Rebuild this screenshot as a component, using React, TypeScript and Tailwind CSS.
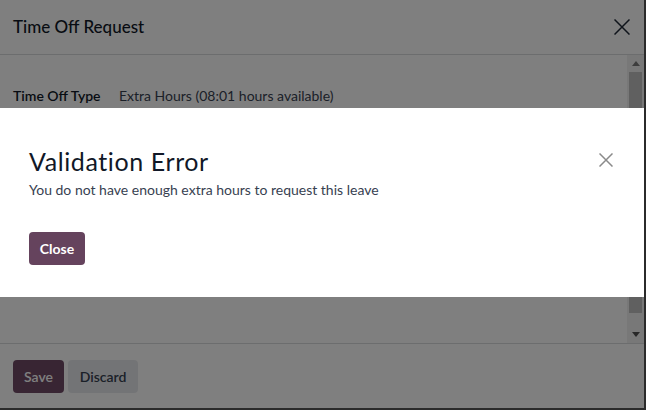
const font = { fontFamily: "Lato, 'Noto Sans', sans-serif" }

function CloseIcon({ size, color, width = 1.5 }: { size: number; color: string; width?: number }) {
  return (
    <svg width={size} height={size} viewBox={`0 0 ${size} ${size}`} fill="none">
      <path d={`M0.5 0.5 L${size - 0.5} ${size - 0.5} M${size - 0.5} 0.5 L0.5 ${size - 0.5}`} stroke={color} strokeWidth={width} />
    </svg>
  )
}

function Scrollbar() {
  return (
    <div className="flex w-[17px] flex-col items-center bg-[#f1f1f1]">
      <div className="flex h-[17px] w-full items-center justify-center">
        <svg width="8" height="5" viewBox="0 0 8 5">
          <path d="M0 5 L4 0 L8 5 Z" fill="#7a7a7a" />
        </svg>
      </div>
      <div className="h-[241px] w-[13px] bg-[#c1c1c1]" />
      <div className="flex-1" />
      <div className="flex h-[17px] w-full items-center justify-center">
        <svg width="8" height="5" viewBox="0 0 8 5">
          <path d="M0 0 L8 0 L4 5 Z" fill="#505050" />
        </svg>
      </div>
    </div>
  )
}

export default function App() {
  return (
    <div className="h-[410px] w-[646px] bg-[#2b2b2b]" style={font}>
      <div className="relative h-[408px] w-[644px] overflow-hidden">
        {/* Time off dialog underneath */}
        <div className="flex h-full flex-col bg-white">
          <div className="flex h-[55px] items-center justify-between border-b border-[#d8dadd] pl-[13px] pr-[14px]">
            <span className="text-[17px] font-medium text-[#111827]">Time Off Request</span>
            <CloseIcon size={16} color="#1f2937" />
          </div>

          <div className="flex h-[288px]">
            <div className="flex-1 px-[13px] pt-[31px]">
              <div className="flex items-center text-[14px] leading-5">
                <span className="w-[106px] font-semibold text-[#111827]">Time Off Type</span>
                <span className="text-[#374151]">Extra Hours (08:01 hours available)</span>
              </div>
            </div>
            <Scrollbar />
          </div>

          <div className="flex flex-1 items-start gap-1 border-t border-[#d8dadd] px-[13px] pt-[16px]">
            <button className="h-[33px] w-[51px] rounded bg-[#714b67] text-[14px] font-semibold text-white">
              Save
            </button>
            <button className="h-[33px] w-[70px] rounded bg-[#e7e9ed] text-[14px] font-semibold text-[#374151]">
              Discard
            </button>
          </div>
        </div>

        {/* Backdrop */}
        <div className="absolute inset-0 bg-black/50" />

        {/* Validation error modal */}
        <div className="absolute left-0 top-[108px] flex h-[189px] w-full flex-col bg-white pl-[29px] pr-[31px] pt-[39px]">
          <div className="flex items-start justify-between">
            <div>
              <h2 className="text-[25px] leading-[29px] tracking-[0.6px] text-[#111827]">Validation Error</h2>
              <p className="mt-[4px] text-[14px] leading-5 text-[#374151]">
                You do not have enough extra hours to request this leave
              </p>
            </div>
            <div className="mt-[6px]">
              <CloseIcon size={14} color="#8a8a8a" />
            </div>
          </div>
          <div className="mt-[32px]">
            <button className="h-[33px] w-[56px] rounded bg-[#65435d] text-[14px] font-bold text-white">
              Close
            </button>
          </div>
        </div>
      </div>
    </div>
  )
}
